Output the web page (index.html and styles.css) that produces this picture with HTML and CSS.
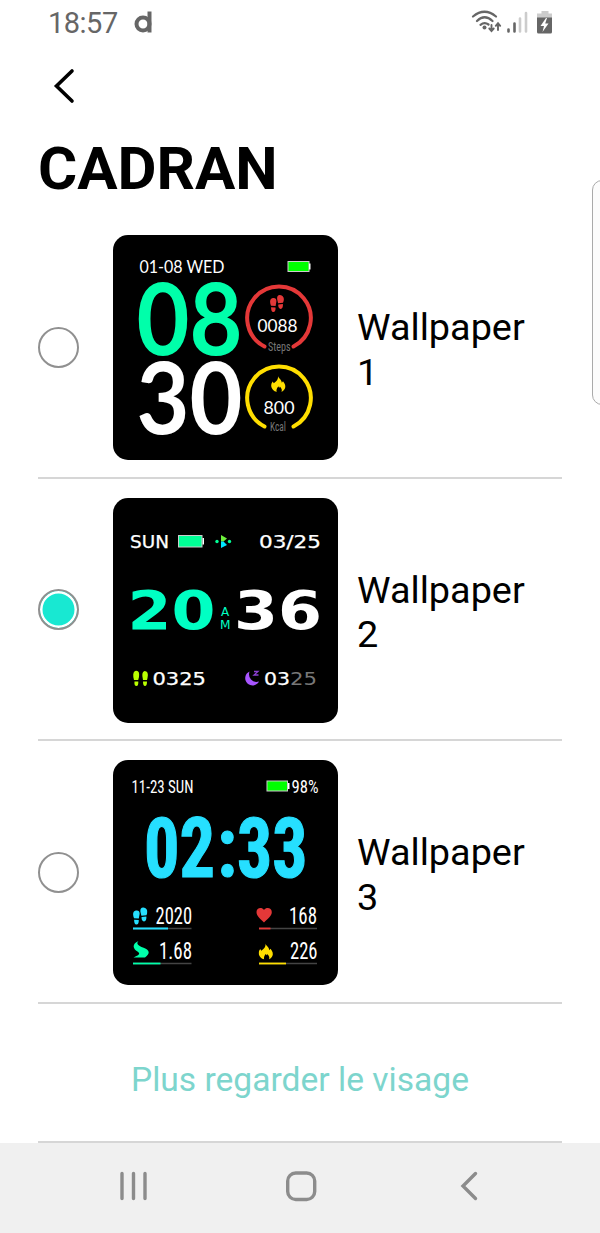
FILE: index.html
```html
<!DOCTYPE html>
<html lang="fr">
<head>
<meta charset="utf-8">
<title>Cadran</title>
<link rel="stylesheet" href="styles.css">
</head>
<body>
<svg class="defs" width="0" height="0" aria-hidden="true">
  <symbol id="shoes" viewBox="0 0 14 18" preserveAspectRatio="none">
    <path d="M2.8 3.6C5.500 3 6.800 5 6.300 7.500L5.600 11.500 1 11.2C-.5 8-.3 4 2.800 3.600ZM1.100 12.700L5.500 13.100C5.800 15.300 5 17.800 3.300 17.600 1.500 17.400 1 15 1.100 12.700ZM10 .4C7.500.2 6.800 2.600 7.200 5L8.100 8.700 13 8.200C14.700 5 14 .7 10 .4ZM8.300 10L12.900 9.600C13.100 12 12.500 14.400 10.700 14.400 9 14.500 8 12.500 8.300 10Z"/>
  </symbol>
  <symbol id="flame" viewBox="0 0 15 16" preserveAspectRatio="none">
    <path d="M7 0C7.2 2 10.8 3.7 10.8 6.7L12 5.2C14.2 7.7 14.9 10.5 13.9 12.6 13.2 14.2 12 15.3 10.5 16 11.3 14.2 10.7 12.4 8.9 10.5 8.8 12 7.7 12.1 7.5 10.3 5.5 12.2 5.2 14.4 5.7 16 3 15.4.2 13 .2 9.6.2 8 .9 6.600 1.700 5.500L2.800 7.300C5.500 5.400 7.400 3.500 7 0Z"/>
  </symbol>
</svg>
<div class="screen">
  <header class="status">
    <span class="status-time">18:57</span>
    <svg class="status-app" width="20" height="26" viewBox="0 0 20 26" fill="none" stroke="#666" stroke-width="4"><circle cx="10" cy="14" r="6.500"/><path d="M16.500 1.500V22.500"/></svg>
    <svg class="status-icons" width="84" height="26" viewBox="0 0 84 26">
      <g fill="none" stroke="#666" stroke-width="2.200" stroke-linecap="round">
        <path d="M2 6.500Q13.500-3 25 6.500M6 11Q13.500 3.500 21.500 11M9.500 14.800Q13.500 11.500 17.500 14.500"/>
        <path d="M20.500 15V20.500M18.300 18.500L20.500 21 22.700 18.500M27 20V13.500M24.800 15.800L27 13.300 29.200 15.800" stroke-width="1.900"/>
      </g>
      <circle cx="13.500" cy="17.500" r="2" fill="#666"/>
      <path d="M37.500 19.500V21.500M43.500 13.500V21.500" stroke="#666" stroke-width="2.600" stroke-linecap="round"/>
      <path d="M49 8.500V21.500M55 3V21.500" stroke="#ccc" stroke-width="2.600" stroke-linecap="round"/>
      <path d="M70.500 1H77.500V3.500H81V8H66V3.500H70.500Z" fill="#ccc"/>
      <path d="M66 7.500H81V22Q81 23.500 79.500 23.500H67.500Q66 23.500 66 22Z" fill="#666"/>
      <path d="M75 8L69.500 16H73L71.500 22 77.500 13.500H74.200L76 8Z" fill="#fff"/>
    </svg>
  </header>
  <nav class="topbar"><svg width="24" height="36" viewBox="0 0 24 36"><path d="M20 3L4.500 18 20 33" fill="none" stroke="#000" stroke-width="3.600" stroke-linecap="round"/></svg></nav>
  <h1 class="title">CADRAN</h1>
  <ul class="faces">
    <li class="face">
      <span class="radio"></span>
      <svg class="dial" viewBox="0 0 225 225">
        <rect width="225" height="225" rx="15"/>
        <g class="geo" fill="#fff">
          <text x="26.500" y="38" font-size="17" textLength="85" lengthAdjust="spacingAndGlyphs">01-08 WED</text>
          <g class="big" font-size="99">
            <text x="23.500" y="119.500" textLength="106" lengthAdjust="spacingAndGlyphs" fill="#00ffaa">08</text>
            <text x="23.500" y="198.500" textLength="106" lengthAdjust="spacingAndGlyphs">30</text>
          </g>
          <text x="144.500" y="97" font-size="17.500" textLength="40" lengthAdjust="spacingAndGlyphs">0088</text>
          <text x="150.500" y="179" font-size="17.500" textLength="31" lengthAdjust="spacingAndGlyphs">800</text>
        </g>
        <g class="narrow" fill="#777" font-size="13.500">
          <text x="155" y="116" textLength="22.500" lengthAdjust="spacingAndGlyphs">Steps</text>
          <text x="157" y="196" textLength="16" lengthAdjust="spacingAndGlyphs">Kcal</text>
        </g>
        <rect x="175" y="26.500" width="21" height="10" fill="#0f0" stroke="#ccc"/><path d="M196 28.500H197.500V34.500H196Z" fill="#fff"/>
        <g fill="none" stroke-width="4" stroke-linecap="round">
          <path d="M151.500 111.500A31.800 31.800 0 1 1 180.500 111.500" stroke="#e43838"/>
          <path d="M151.500 191.500A31.800 31.800 0 1 1 180.500 191.500" stroke="#ffde00"/>
        </g>
        <use href="#shoes" x="157" y="59.500" width="14" height="18" fill="#e43838"/>
        <use href="#flame" x="158" y="141" width="15" height="16" fill="#ffde00"/>
      </svg>
      <span class="name">Wallpaper 1</span>
    </li>
    <li class="face">
      <span class="radio radio-on"></span>
      <svg class="dial" viewBox="0 0 225 225">
        <rect width="225" height="225" rx="15"/>
        <g class="square" fill="#fff">
          <g font-size="17.500" stroke-width=".25">
            <text x="17" y="49.500" textLength="39" lengthAdjust="spacingAndGlyphs" stroke="#fff">SUN</text>
            <text x="146" y="49.500" textLength="62" lengthAdjust="spacingAndGlyphs" stroke="#fff">03/25</text>
            <text x="39.500" y="187" textLength="53.500" lengthAdjust="spacingAndGlyphs" stroke="#fff">0325</text>
            <text x="151" y="187" textLength="26" lengthAdjust="spacingAndGlyphs" stroke="#fff">03</text>
            <text x="177" y="187" textLength="27" lengthAdjust="spacingAndGlyphs" fill="#777">25</text>
          </g>
          <g class="heavy" font-size="53">
            <text x="14.500" y="131" textLength="88" lengthAdjust="spacingAndGlyphs" fill="#00ffc3">20</text>
            <text x="121" y="131" textLength="88" lengthAdjust="spacingAndGlyphs">36</text>
          </g>
          <g fill="#00ffc3" font-size="12"><text x="108" y="117.500">A</text><text x="107" y="130.500" textLength="10.500" lengthAdjust="spacingAndGlyphs">M</text></g>
        </g>
        <rect x="65.500" y="37.500" width="23.500" height="11.500" fill="#00ff96" stroke="#ccc"/><path d="M89.500 40H91V46.500H89.500Z" fill="#fff"/>
        <path d="M108 37L114 40.500 110.500 43.500H108Z" fill="#6ef03c"/><path d="M108 43.500H110.500L114 47 108 50Z" fill="#00e5ff"/>
        <circle cx="104" cy="43.500" r="1.700" fill="#00ff96"/><circle cx="116.500" cy="43.500" r="1.700" fill="#00ff96"/>
        <g fill="#b9ff00">
          <path d="M21 182Q19 175 22 173 27 171.500 26 179L25.200 182ZM21.500 183.500H25.300Q25.500 188 23.500 188 21 188 21.500 183.500Z"/>
          <path d="M30 182Q28 174 31.500 173 36 173 34.500 180L34 182ZM30 183.500H34Q34 188 32 188 30 188 30 183.500Z"/>
        </g>
        <path d="M136.500 173.500A7.300 7.300 0 1 0 146 183.500Q141 185 138 181.500 135 178 136.500 173.500Z" fill="#a855ff"/>
        <path d="M141 173.500H145L141 177H145.500" fill="none" stroke="#8a3fd1" stroke-width="1.300"/>
      </svg>
      <span class="name">Wallpaper 2</span>
    </li>
    <li class="face">
      <span class="radio"></span>
      <svg class="dial" viewBox="0 0 225 225">
        <rect width="225" height="225" rx="15"/>
        <g class="narrow" fill="#fff">
          <text x="18.500" y="33" font-size="18.500" textLength="62" lengthAdjust="spacingAndGlyphs">11-23 SUN</text>
          <text x="178.500" y="33" font-size="18.500" textLength="27" lengthAdjust="spacingAndGlyphs">98%</text>
          <g class="heavy" fill="#26dfff" stroke="#26dfff" stroke-width="1.200" font-size="82.500">
            <text x="31" y="117" textLength="71" lengthAdjust="spacingAndGlyphs">02</text><text x="104" y="117" textLength="20" lengthAdjust="spacingAndGlyphs">:</text><text x="124" y="117" textLength="70.500" lengthAdjust="spacingAndGlyphs">33</text>
          </g>
          <g font-size="24">
            <text x="42.500" y="164" textLength="36.500" lengthAdjust="spacingAndGlyphs">2020</text>
            <text x="176" y="164" textLength="28" lengthAdjust="spacingAndGlyphs">168</text>
            <text x="46" y="199" textLength="33" lengthAdjust="spacingAndGlyphs">1.68</text>
            <text x="177" y="199" textLength="27.500" lengthAdjust="spacingAndGlyphs">226</text>
          </g>
        </g>
        <rect x="154" y="21" width="20.500" height="10" fill="#0f0" stroke="#ccc"/><path d="M175 23H176.500V29H175Z" fill="#fff"/>
        <path d="M20 168.500H78.500M146 168.500H204M20 203.500H78.500M146 203.500H204" stroke="#444" stroke-width="1.500"/>
        <path d="M20 168.500H55" stroke="#26dfff" stroke-width="1.800"/><path d="M146 168.500H157.500" stroke="#e43838" stroke-width="1.800"/>
        <path d="M20 203.500H47.500" stroke="#00ffaa" stroke-width="1.800"/><path d="M146 203.500H173" stroke="#ffde00" stroke-width="1.800"/>
        <use href="#shoes" x="20" y="147" width="14.500" height="18" fill="#26dfff"/>
        <use href="#flame" x="145.500" y="183.500" width="15" height="16" fill="#ffde00"/>
        <path d="M151 162.500C147 158.500 143.500 156 143.500 152 143.500 148 148.500 146.500 151 150 153.500 146.500 158.800 148 158.800 152 158.800 156 155 158.500 151 162.500Z" fill="#e43838"/>
        <path d="M25.500 181C22.500 184 26 186 30 187.500 37 190 37.500 193.500 32 197.500H20.500C24.500 195.500 28.500 194 24.500 191.500 20 189 18.500 184 25.500 181Z" fill="#00ffaa"/>
      </svg>
      <span class="name">Wallpaper 3</span>
    </li>
  </ul>
  <a class="more">Plus regarder le visage</a>
  <footer class="navbar">
    <svg width="34" height="34" viewBox="0 0 34 34"><path d="M5 4.500V29.500M16.500 4.500V29.500M28 4.500V29.500" fill="none" stroke="#8c8c8c" stroke-width="3.400" stroke-linecap="round"/></svg>
    <svg width="34" height="34" viewBox="0 0 34 34"><rect x="3.700" y="4" width="27" height="26.500" rx="8" fill="none" stroke="#8c8c8c" stroke-width="3.400"/></svg>
    <svg width="34" height="34" viewBox="0 0 34 34"><path d="M24.500 4.500L12 17 24.500 29.500" fill="none" stroke="#8c8c8c" stroke-width="3.400" stroke-linecap="round"/></svg>
  </footer>
  <div class="edge-handle"></div>
</div>
</body>
</html>
```
FILE: styles.css
```css
* { box-sizing: border-box; }
body { margin: 0; background: #fff; font-family: Roboto, "Liberation Sans", sans-serif; color: #000; }
.defs { position: absolute; }
.screen { position: relative; width: 600px; height: 1233px; overflow: hidden; display: flex; flex-direction: column; }
.status { height: 46px; padding: 0 45px 0 48px; display: flex; align-items: center; color: #666; }
.status-time { font-size: 29px; line-height: 46px; letter-spacing: -.5px; }
.status-app { margin-left: 15px; }
.status-icons { margin-left: auto; }
.topbar { height: 81px; padding: 22px 0 0 52px; }
.topbar svg { display: block; }
.title { margin: 0; padding-left: 38px; height: 89px; font-size: 60px; line-height: 84px; font-weight: 700; }
.faces { list-style: none; margin: 0 38px; padding: 0; }
.face { height: 262.600px; padding-top: 1.500px; border-bottom: 2px solid #d6d6d6; display: flex; align-items: center; }
.radio { width: 41px; height: 41px; margin-right: 34px; border: 2px solid #909090; border-radius: 50%; flex: none; }
.radio-on { background: #18e8d2; box-shadow: inset 0 0 0 2.500px #fff; }
.dial { width: 225px; height: 225px; margin: 1px 19px 0 0; flex: none; }
.name { width: 180px; padding-top: 5px; font-size: 37.800px; line-height: 44.500px; }
.geo { font-family: Lato, sans-serif; }
.big { font-weight: 700; }
.narrow { font-family: "Roboto Condensed", Roboto, sans-serif; }
.square { font-family: "DejaVu Sans", sans-serif; }
.heavy { font-weight: 700; }
.more { display: block; height: 139px; margin: 0 38px; border-bottom: 2px solid #d6d6d6; color: #7dd5cd; font-size: 33.600px; line-height: 151px; text-align: center; white-space: nowrap; }
.navbar { margin-top: auto; height: 90px; padding: 0 115px 4px 117px; background: #f0f0f0; display: flex; justify-content: space-between; align-items: center; }
.edge-handle { position: absolute; left: 592px; top: 180px; width: 30px; height: 225px; border: 1.500px solid #aaa; border-radius: 10px; background: #fcfcfc; }
```
